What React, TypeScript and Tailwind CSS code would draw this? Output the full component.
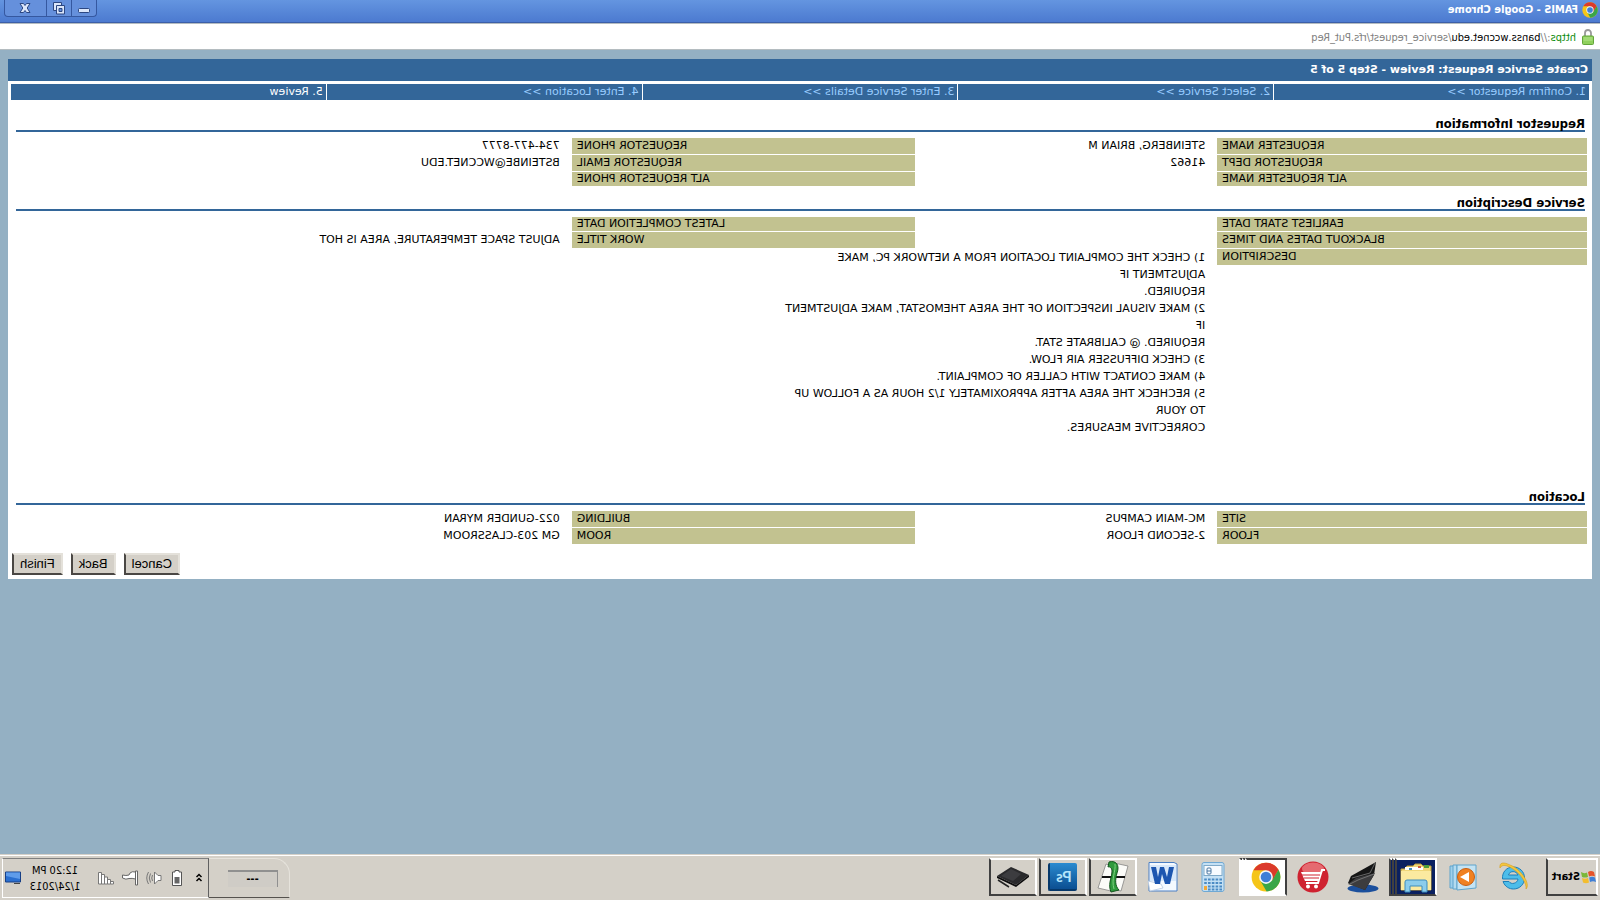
import type { ReactNode } from "react";

const steps = [
  "1. Confirm Requestor >>",
  "2. Select Service >>",
  "3. Enter Service Details >>",
  "4. Enter Location >>",
  "5. Review",
];

const description = [
  "1) CHECK THE COMPLAINT LOCATION FROM A NETWORK PC, MAKE",
  "ADJUSTMENT IF",
  "REQUIRED.",
  "2) MAKE VISUAL INSPECTION OF THE AREA THEMOSTAT, MAKE ADJUSTMENT",
  "IF",
  "REQUIRED. @ CALIBRATE STAT.",
  "3) CHECK DIFFUSSER AIR FLOW.",
  "4) MAKE CONTACT WITH CALLER OF COMPLAINT.",
  "5) RECHECK THE AREA AFTER APPROXIMATELY 1/2 HOUR AS A FOLLOW UP",
  "TO YOUR",
  "CORRECTIVE MEASURES.",
];

type Row = [string, string, string, string];

const requestor: Row[] = [
  ["REQUESTER NAME", "STEINBERG, BRIAN M", "REQUESTOR PHONE", "734-477-8777"],
  ["REQUESTOR DEPT", "41662", "REQUESTOR EMAIL", "BSTEINBE@WCCNET.EDU"],
  ["ALT REQUESTER NAME", "", "ALT REQUESTOR PHONE", ""],
];

const service: Row[] = [
  ["EARLIEST START DATE", "", "LATEST COMPLETION DATE", ""],
  ["BLACKOUT DATES AND TIMES", "", "WORK TITLE", "ADJUST SPACE TEMPERATURE, AREA IS HOT"],
];

const location: Row[] = [
  ["SITE", "MC-MAIN CAMPUS", "BUILDING", "022-GUNDER MYRAN"],
  ["FLOOR", "2-SECOND FLOOR", "ROOM", "GM 203-CLASSROOM"],
];

const ChromeLogo = ({ className }: { className: string }) => (
  <svg viewBox="0 0 48 48" className={className}>
    <circle cx="24" cy="24" r="23" fill="#f5c518" />
    <path d="M24 13 H44 A23 23 0 0 0 4 12.500 L14 30 Z" fill="#db3a2b" />
    <path d="M4 12.500 A23 23 0 0 0 23 47 L33 30 H14.500 Z" fill="#3aa648" />
    <circle cx="24" cy="24" r="11" fill="#f4f6f8" />
    <circle cx="24" cy="24" r="8.500" fill="#3f7fd6" />
  </svg>
);

const Label = ({ children }: { children: ReactNode }) => (
  <th scope="row" className="bg-[#c2c290] pr-[5px] text-right font-normal">
    {children}
  </th>
);

const Section = ({ title, rows, children }: { title: string; rows: Row[]; children?: ReactNode }) => (
  <section className="px-[5px]">
    <h2 className="mr-[3px] ml-0.5 border-b-2 border-[#336699] font-['DejaVu_Sans_Condensed','DejaVu_Sans',sans-serif] text-[13px] leading-3 font-bold">
      {title}
    </h2>
    <table className="mt-[5px] w-full table-fixed border-separate border-spacing-x-0 border-spacing-y-px text-[11px] leading-4">
      <colgroup>
        <col className="w-[23.5%]" />
        <col className="w-[19.2%]" />
        <col className="w-[21.8%]" />
        <col />
      </colgroup>
      <tbody>
        {rows.map(([a, b, c, d]) => (
          <tr key={a} className={b || d ? "h-4" : "h-3.5 leading-[14px]"}>
            <Label>{a}</Label>
            <td className="pl-3">{b}</td>
            <Label>{c}</Label>
            <td className="pl-3">{d}</td>
          </tr>
        ))}
        {children}
      </tbody>
    </table>
  </section>
);

const FormButton = ({ children }: { children: ReactNode }) => (
  <button
    type="button"
    className="h-[22px] border-2 border-t-[#e4e1da] border-r-[#4a4744] border-b-[#4a4744] border-l-[#e4e1da] bg-[#d4d0c8] px-1.5 font-['Liberation_Sans',sans-serif] text-[13px] leading-4"
  >
    {children}
  </button>
);

const TitleBar = () => (
  <header className="flex h-[23px] items-start border-b border-[#3c5fa8] bg-linear-to-b from-[#6495e0] to-[#4c7ad0] pr-1 pl-0.5 font-['DejaVu_Sans_Condensed','DejaVu_Sans',sans-serif]">
    <ChromeLogo className="mt-0.5 size-4" />
    <h1 className="ml-1 pt-0.5 text-[11px] leading-4 font-bold text-white">FAMIS - Google Chrome</h1>
    <div className="ml-auto flex h-[17px] overflow-hidden rounded-b-sm border border-t-0 border-[#3558a0] bg-[#6590dc]">
      <button type="button" aria-label="Minimize" className="flex w-[25px] justify-center border-r border-[#3558a0]">
        <svg viewBox="0 0 16 16" className="size-4">
          <rect x="2.500" y="8.500" width="11" height="4" rx="1" fill="#dbe6fa" stroke="#2c4782" />
        </svg>
      </button>
      <button type="button" aria-label="Restore" className="flex w-[25px] justify-center border-r border-[#3558a0]">
        <svg viewBox="0 0 16 16" className="size-4" fill="#dbe6fa" stroke="#2c4782">
          <path d="M4.500 2.500 H12.500 V10.500 H4.500 Z" transform="translate(1 0)" />
          <path d="M2.500 5.500 H10.500 V14 H2.500 Z" />
          <path d="M5 8.500 H8 V11.500 H5 Z" fill="#6590dc" />
        </svg>
      </button>
      <button type="button" aria-label="Close" className="flex w-[41px] justify-center">
        <svg viewBox="0 0 16 16" className="size-4">
          <path d="M3 3.500 H6.500 L8 5.500 L9.500 3.500 H13 L10.200 8 L13 12.500 H9.500 L8 10.500 L6.500 12.500 H3 L5.800 8 Z" fill="#dbe6fa" stroke="#2c4782" />
        </svg>
      </button>
    </div>
  </header>
);

const AddressBar = () => (
  <div className="flex h-[27px] items-center border-y border-[#b4bcc0] bg-white pl-1.5 font-['DejaVu_Sans_Condensed','DejaVu_Sans',sans-serif] text-[11px] leading-4">
    <svg viewBox="0 0 12 16" className="mr-1.5 h-4 w-3">
      <path d="M3 8 V4 A3 3 0 0 1 9 4 V8" fill="none" stroke="#9a9a9a" strokeWidth="1.800" />
      <rect x="0.500" y="7" width="11" height="8.500" rx="1" fill="#8fd05c" stroke="#62a53a" />
      <path d="M1.500 9 H10.500 M1.500 11 H10.500" stroke="#b5e58e" />
    </svg>
    <a href="#request" className="pt-0.5 text-[#808080]">
      <span className="text-[#0a8a0a]">https</span>://<span className="text-black">banss.wccnet.edu</span>/service_request/rfs.Put_Req
    </a>
  </div>
);

const IeIcon = () => (
  <svg viewBox="0 0 32 32" className="size-8">
    <path d="M26.500 18 H11 C11.500 22.500 18 24 20 20.500 H26 C24 26 19.500 28 15.500 28 C9 28 4.500 23 4.500 17 C4.500 10.500 9.500 6 15.500 6 C22.500 6 27 11 26.500 18 Z M11 14 H20.500 C19.500 9.500 12.500 9.500 11 14 Z" fill="#4dbdea" stroke="#1e7fb8" fillRule="evenodd" />
    <path d="M3 28 C-2 23 8 8 19 4 C25 1 30 1 29 7 C27 3 22 4 16 8 C8 13 2 23 3 28 Z" fill="#f4c63c" stroke="#d59c1c" strokeWidth="0.600" />
  </svg>
);

const MediaIcon = () => (
  <svg viewBox="0 0 32 32" className="size-8">
    <path d="M25 5 H29 V27 H25 Z" fill="#9fd0ec" stroke="#5fa4cc" />
    <path d="M22 4 H26 V28 H22 Z" fill="#b4dbf0" stroke="#5fa4cc" />
    <path d="M3 4 H22 V29 L3 27 Z" fill="#c4e3f3" stroke="#5fa4cc" />
    <circle cx="13" cy="16" r="8.500" fill="#f08122" stroke="#c85e12" />
    <path d="M10 11 L19 16 L10 21 Z" fill="#fff" />
  </svg>
);

const FolderIcon = () => (
  <svg viewBox="0 0 32 32" className="size-8">
    <path d="M1 5 H9 L11 3 H17 L19 5 H25 L27 8 H31 V29 H1 Z" fill="#f0d779" stroke="#b99a3a" />
    <path d="M3 4 H8 V7 H3 Z" fill="#4f9e3a" />
    <path d="M9 6 H27 V9 H9 Z" fill="#fff" />
    <path d="M11 5 H14 V7 H11 Z" fill="#d05a3a" />
    <path d="M20 7 H23 V9 H20 Z" fill="#3f8dbd" />
    <path d="M1 10 H31 V29 H1 Z" fill="#fbeaa0" />
    <path d="M5 31 V21 Q5 19 7 19 H25 Q27 19 27 21 V31 H22 V25 H10 V31 Z" fill="#8ccdec" stroke="#3f8dbd" />
  </svg>
);

const ScannerIcon = () => (
  <svg viewBox="0 0 32 32" className="size-8">
    <ellipse cx="16" cy="27.500" rx="15.500" ry="4" fill="#1b4f9c" />
    <path d="M3 1 L28 15 L31 22 L14 29 L5 14 Z" fill="#161616" />
    <path d="M4 12 L23 17 L31 23 L14 29 Z" fill="#3c3c3e" />
    <path d="M4 2 L9 12 L27 17 M5 13 L21 19 L29 23" fill="none" stroke="#8a8a8a" strokeWidth="0.700" />
  </svg>
);

const CartIcon = () => (
  <svg viewBox="0 0 32 32" className="size-8">
    <circle cx="16" cy="16" r="15.500" fill="#cf2230" />
    <ellipse cx="16" cy="8" rx="11" ry="6.500" fill="#e56a70" />
    <path d="M28 9 H25 L21 22 H9" fill="none" stroke="#fff" strokeWidth="2" transform="matrix(-1 0 0 1 32 0)" />
    <path d="M8 11 H28 L24 20 H11 Z" fill="#fff" />
    <path d="M9 14 H27 M10 17 H25" stroke="#cf2230" strokeWidth="1.200" />
    <circle cx="13" cy="25.500" r="2" fill="#fff" />
    <circle cx="21" cy="25.500" r="2" fill="#fff" />
  </svg>
);

const CalcIcon = () => (
  <svg viewBox="0 0 32 32" className="size-8">
    <rect x="5" y="1.500" width="22" height="29" rx="2" fill="#c4e0f4" stroke="#6ea8d4" />
    <rect x="7" y="4.500" width="18" height="10" fill="#f7fbff" stroke="#7fa9c8" />
    <rect x="18" y="7" width="4" height="6" rx="1" fill="none" stroke="#4775a0" />
    <path d="M18 10 H22" stroke="#4775a0" />
    <path d="M7 18.500 H25 M7 22 H25 M7 25.500 H21 M7 28.500 H21" stroke="#4b8bc4" strokeWidth="2.200" strokeDasharray="2.600 1.200" />
    <rect x="22" y="25" width="3" height="4" fill="#f0a83a" />
  </svg>
);

const WordIcon = () => (
  <svg viewBox="0 0 32 32" className="size-8">
    <path d="M2 3 L5 1.500 H30 V30 H2 Z" fill="#f4f9ff" stroke="#4b7fc4" />
    <path d="M3 4 H29 V20 H3 Z" fill="#d8e8fa" />
    <path d="M18 23 L31 20 L29 30 L16 27 Z" fill="#fff" stroke="#b5c8e0" strokeWidth="0.800" />
    <path d="M5 6 H10 L12 16 L15 6 H19 L21 16 L23 6 H28 L24 23 H19 L17 13 L14 23 H9 Z" fill="#1d56b0" />
  </svg>
);

const NotesIcon = () => (
  <svg viewBox="0 0 32 32" className="size-8">
    <path d="M1 5 L15 2 L20 27 L8 30 Z" fill="#fbfbf8" stroke="#777" strokeWidth="0.700" />
    <path d="M17 5 L23 3 L31 27 L18 30 Z" fill="#fbfbf8" stroke="#777" strokeWidth="0.700" />
    <path d="M4 16 H27" stroke="#111" strokeWidth="2" />
    <path d="M20 1 C13 -1 9 4 12 12 C14 19 14 25 10 29 L18 31 C21 24 18 18 17 12 C16 8 19 5 21 6 Z" fill="#2e9a3c" stroke="#14551d" />
    <path d="M14 3 C13 10 18 18 15 28" fill="none" stroke="#7ed07f" />
  </svg>
);

const TabletIcon = () => (
  <svg viewBox="0 0 32 32" className="size-8">
    <path d="M0 14 L18 6 L32 15 L13 24 Z" fill="#2a2a2c" />
    <path d="M0 14 L13 24 L32 15 V17 L13 26 L0 16 Z" fill="#0d0d0e" />
    <path d="M8 13 L18 8 L28 15 L16 20 Z" fill="#3c3c3f" />
    <path d="M20 26 L31 19" stroke="#222" strokeWidth="1.500" />
  </svg>
);

type Task = { name: string; icon: ReactNode; style: string; stacked?: boolean };

const flat = "border-transparent";
const raised = "border-t-white border-r-[#404040] border-b-[#404040] border-l-white";
const pressed = "border-t-[#404040] border-r-white border-b-white border-l-[#404040]";

const tasks: Task[] = [
  { name: "Internet Explorer", icon: <IeIcon />, style: flat },
  { name: "Media Player", icon: <MediaIcon />, style: flat },
  { name: "Explorer", icon: <FolderIcon />, style: `${raised} bg-[#0a2060]`, stacked: true },
  { name: "Scanner", icon: <ScannerIcon />, style: flat },
  { name: "Store", icon: <CartIcon />, style: flat },
  { name: "Chrome", icon: <ChromeLogo className="size-[30px]" />, style: `${pressed} bg-white`, stacked: true },
  { name: "Calculator", icon: <CalcIcon />, style: flat },
  { name: "Word", icon: <WordIcon />, style: flat },
  { name: "Notes", icon: <NotesIcon />, style: raised },
  {
    name: "Photoshop",
    icon: (
      <span className="flex h-7 w-[29px] items-center justify-center rounded-xs border-r-2 border-b-2 border-[#06386a] bg-linear-to-b from-[#2a8bd0] to-[#0c4f92] font-['Lato',sans-serif] text-[15px] leading-4 font-bold text-[#b4e4fa]">
        Ps
      </span>
    ),
    style: raised,
  },
  { name: "Tablet", icon: <TabletIcon />, style: raised },
];

const Taskbar = () => (
  <footer className="flex h-[46px] shrink-0 items-start border-t border-[#d4d0c8] bg-[#d4d0c8] px-0.5 pt-[3px] font-['DejaVu_Sans_Condensed','DejaVu_Sans',sans-serif] text-[11px] leading-4 shadow-[inset_0_1px_0_white]">
    <button type="button" className={`mr-[9px] flex h-[38px] w-[52px] items-center border-2 font-bold ${raised}`}>
      <svg viewBox="0 0 16 16" className="size-4 shrink-0">
        <path d="M2 3 Q5 1 8 3 L7 7.500 Q4 6 1 7.500 Z" fill="#e5542b" />
        <path d="M9 3.500 Q12 5 15 3 L14 8 Q11 9 8 8 Z" fill="#7bb83a" />
        <path d="M1 8.500 Q4 7 6.800 8.500 L6 13 Q3 11.500 0 13 Z" fill="#3f7fd6" />
        <path d="M8 9 Q11 10.500 14 9 L13 13.500 Q10 15 7 13.500 Z" fill="#f3bd2e" />
      </svg>
      Start
    </button>
    <nav className="flex gap-0.5">
      {tasks.map((t) => (
        <div key={t.name} className="flex h-[38px] w-12">
          <button type="button" aria-label={t.name} className={`flex grow items-center justify-center border-2 ${t.style}`}>
            {t.icon}
          </button>
          {t.stacked && (
            <>
              <span className={`w-[3px] border-t-2 border-r-2 border-b-2 ${t.style}`} />
              <span className={`w-[3px] border-t-2 border-r-2 border-b-2 ${t.style}`} />
            </>
          )}
        </div>
      ))}
    </nav>
    <div className="ml-auto flex h-10 w-[81px] items-center justify-center rounded-tl-2xl border-t border-b border-l border-t-[#e6e3dc] border-b-[#55524e] border-l-[#e6e3dc] pr-2">
      <span className="flex h-[17px] w-[50px] items-center justify-center border-t-2 border-l border-[#909090] bg-[#cfccc6] font-bold">---</span>
    </div>
    <div className="flex h-10 w-[207px] items-center border border-t-[#808080] border-r-white border-b-white border-l-[#606060] pl-1">
      <svg viewBox="0 0 10 16" className="h-4 w-2.5" fill="none" stroke="#000" strokeWidth="1.500">
        <path d="M2.500 7 L5 4.500 L7.500 7 M2.500 11 L5 8.500 L7.500 11" />
      </svg>
      <svg viewBox="0 0 16 16" className="ml-[9px] size-4" stroke="#555">
        <path d="M6 0.500 H10 V2 H12.500 V15.500 H3.500 V2 H6 Z" fill="#fff" />
        <path d="M5.500 7 H10.500 V13.500 H5.500 Z" fill="#666" stroke="none" />
      </svg>
      <svg viewBox="0 0 16 16" className="ml-[7px] size-4" fill="none" stroke="#777">
        <path d="M1 5.500 H4 L7.500 2 V14 L4 10.500 H1 Z" fill="#fff" />
        <path d="M9.500 5 Q11 8 9.500 11 M11.500 3.500 Q14 8 11.500 12.500 M13.500 2 Q17 8 13.500 14" />
      </svg>
      <svg viewBox="0 0 18 16" className="ml-[7px] h-4 w-[18px]" stroke="#666">
        <path d="M1.500 1 H3.500 V15 H1.500 Z" fill="#fff" />
        <path d="M3.500 2 Q7 1 9 3 L10 5 Q13 6 16.500 5 V8 Q13 10 10 8.500 Q7 8 3.500 9 Z" fill="#fff" />
      </svg>
      <svg viewBox="0 0 16 16" className="ml-[7px] size-4" fill="#fff" stroke="#777">
        <path d="M0.500 11.500 H3.500 V14 H0.500 Z M3.500 9.500 H6.500 V14 H3.500 Z M6.500 7 H9.500 V14 H6.500 Z M9.500 4.500 H12.500 V14 H9.500 Z M12.500 2.500 H15.500 V14 H12.500 Z" />
      </svg>
      <div className="ml-4 w-[54px] pt-0.5 text-center">
        <p>12:20 PM</p>
        <p>1/24/2013</p>
      </div>
      <svg viewBox="0 0 16 14" className="mr-0.5 ml-auto h-3.5 w-4">
        <path d="M0.500 1 H15.500 V11 H0.500 Z" fill="#2a6fd0" stroke="#173f85" />
        <path d="M1 1.500 H15 V5 L1 8 Z" fill="#5f9cea" />
        <path d="M1 12.500 H7" stroke="#444" />
      </svg>
    </div>
  </footer>
);

export default function App() {
  return (
    <div className="flex min-h-screen -scale-x-100 flex-col bg-[#94b0c3] text-black">
      <TitleBar />
      <AddressBar />
      <main className="mx-2 mt-[9px] bg-white pb-1 font-['DejaVu_Sans',sans-serif]">
        <h2 className="bg-[#336699] pl-1 text-[11px] leading-[22px] font-bold text-white">
          Create Service Request: Review - Step 5 of 5
        </h2>
        <ol className="mx-[3px] mt-[3px] grid grid-cols-5 gap-px text-[11px] leading-4 text-[#99ccff]">
          {steps.map((s) => (
            <li key={s} className="bg-[#336699] pl-[3px] last:text-white">
              {s}
            </li>
          ))}
        </ol>
        <div className="mt-[18px]">
          <Section title="Requestor Information" rows={requestor} />
        </div>
        <div className="mt-[10px]">
          <Section title="Service Description" rows={service}>
            <tr className="align-top">
              <th scope="row" className="text-right font-normal">
                <div className="bg-[#c2c290] pr-[5px]">DESCRIPTION</div>
              </th>
              <td colSpan={3} className="pl-3 leading-[17px]">
                {description.map((line) => (
                  <p key={line}>{line}</p>
                ))}
              </td>
            </tr>
          </Section>
        </div>
        <div className="mt-[54px]">
          <Section title="Location" rows={location} />
        </div>
        <div className="mt-2 flex justify-end gap-2 pr-1">
          <FormButton>Cancel</FormButton>
          <FormButton>Back</FormButton>
          <FormButton>Finish</FormButton>
        </div>
      </main>
      <div className="grow" />
      <Taskbar />
    </div>
  );
}
